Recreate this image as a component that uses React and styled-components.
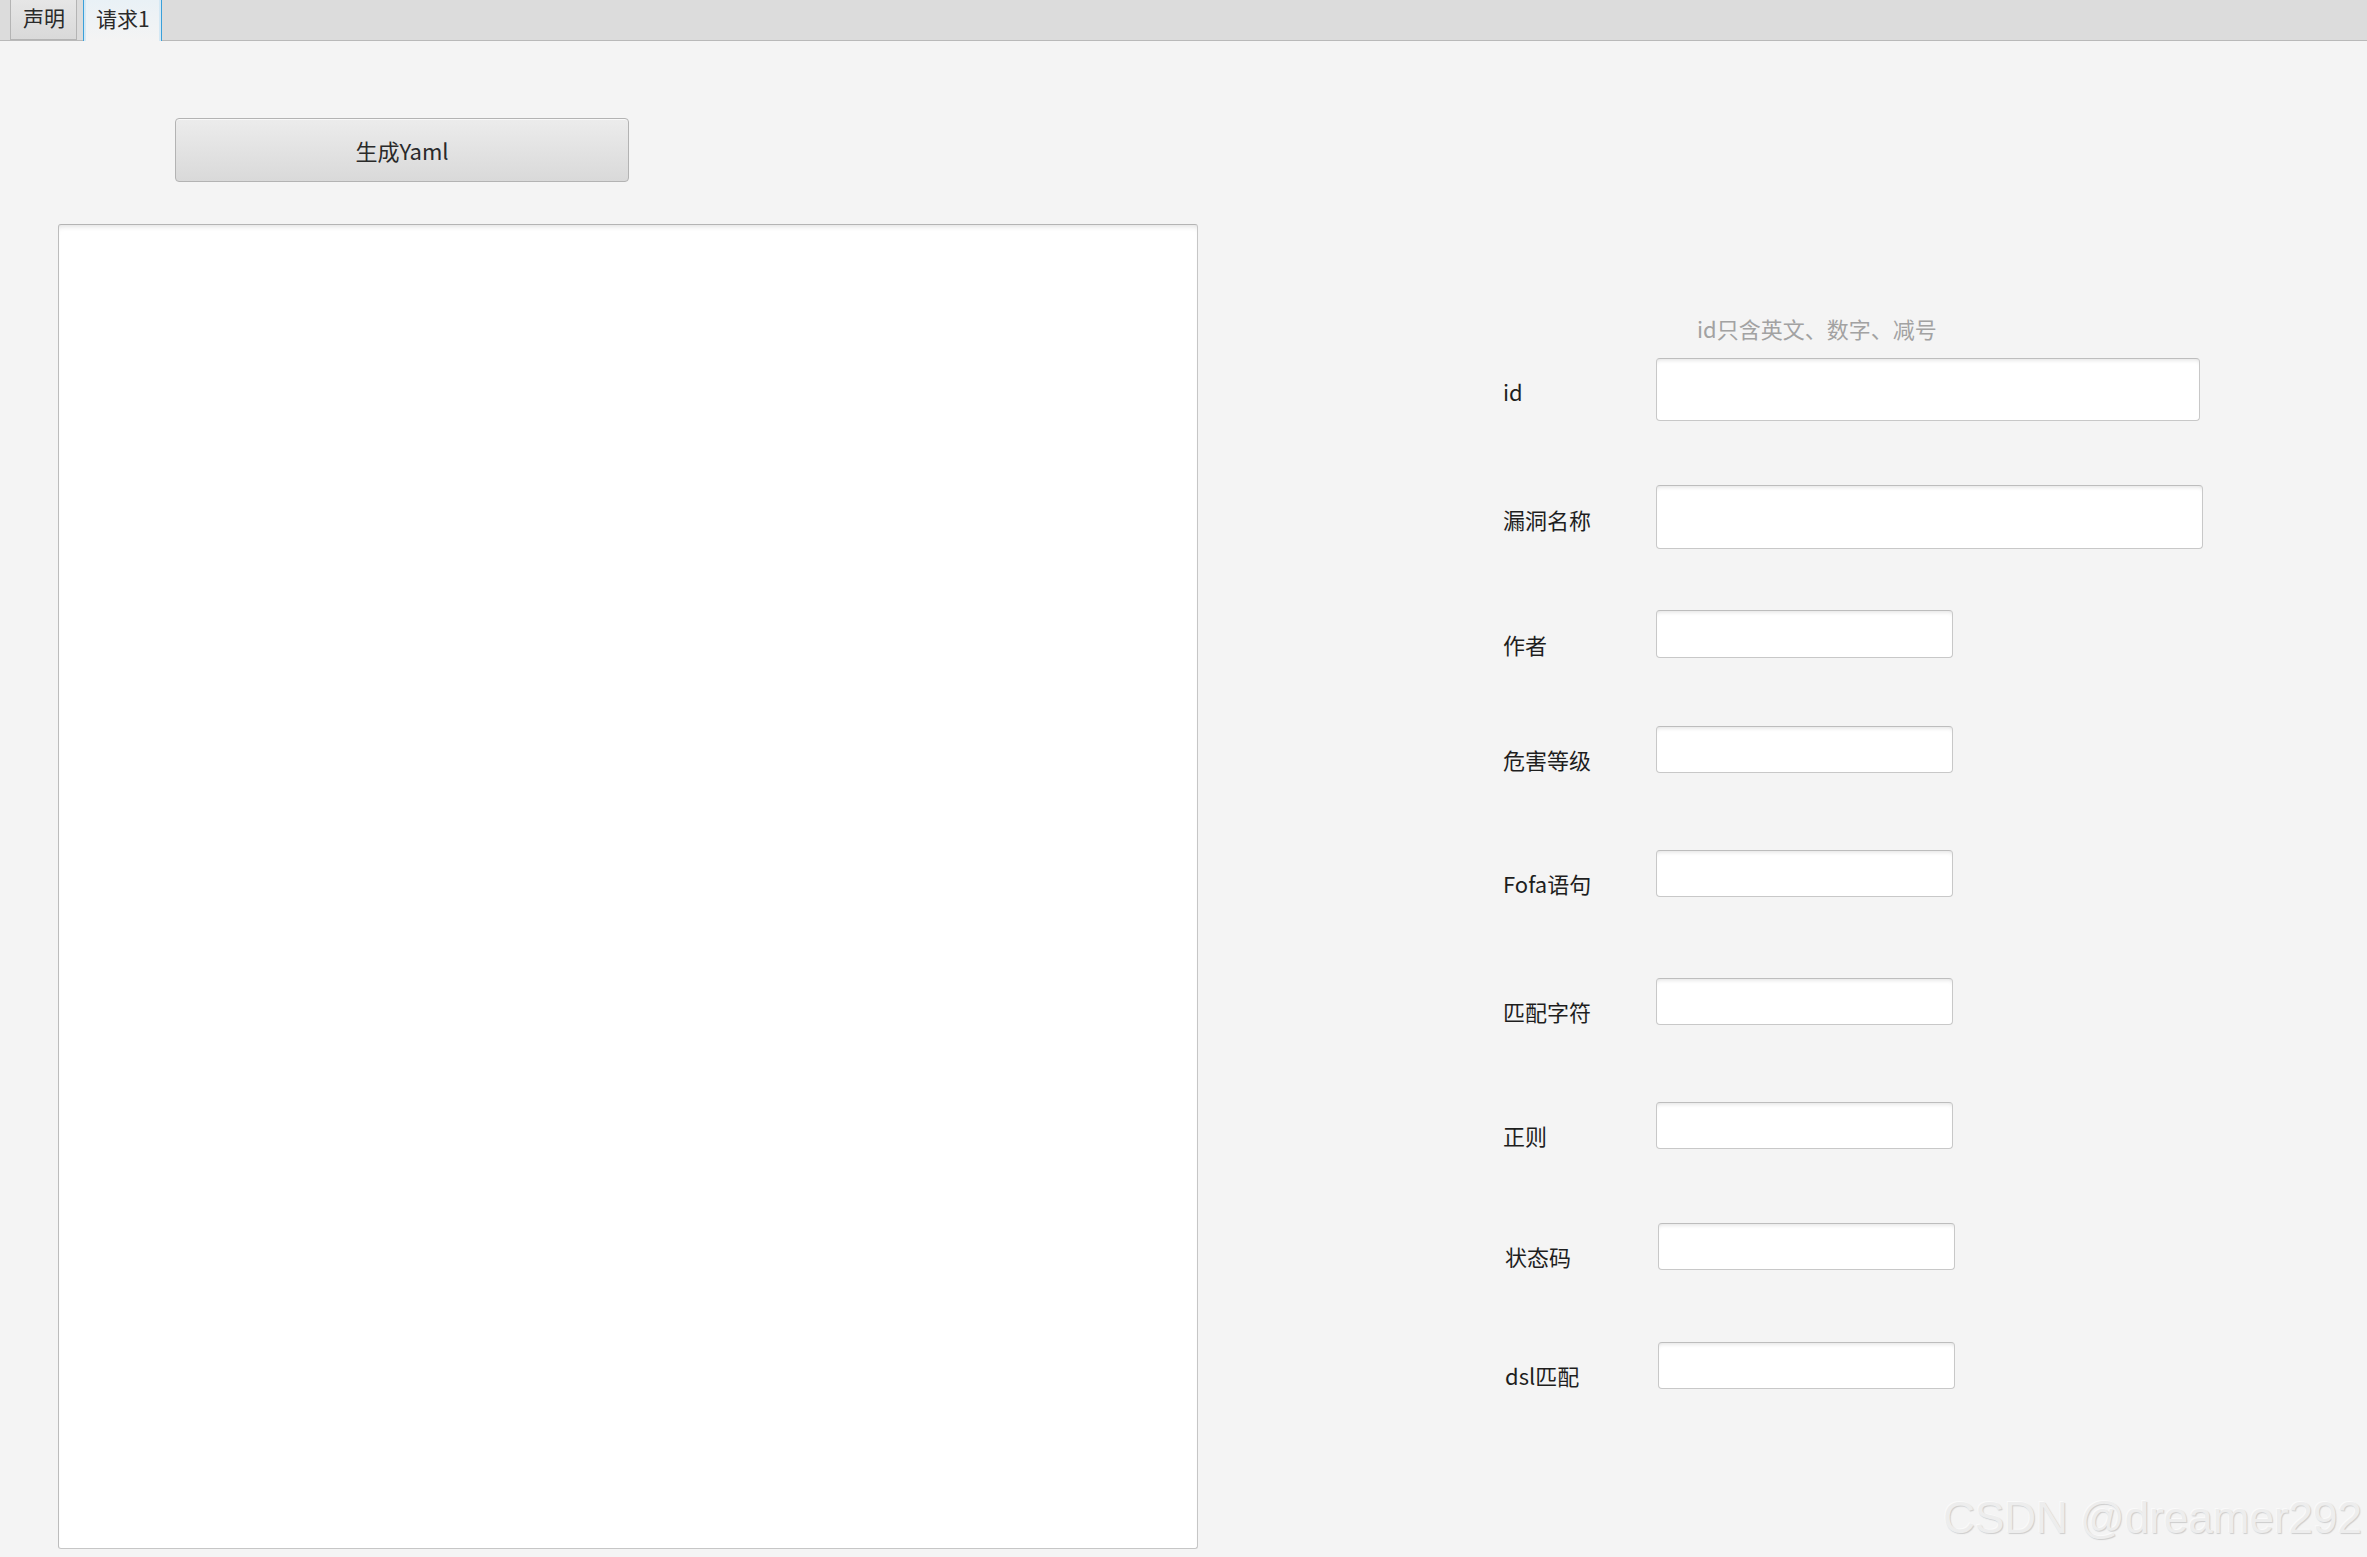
import React from "react"
import styled, { createGlobalStyle } from "styled-components"

const GlobalStyle = createGlobalStyle`
  html, body {
    margin: 0;
    padding: 0;
    background: #f4f4f4;
  }
  body {
    font-family: "Noto Sans CJK SC", "Noto Sans", sans-serif;
    color: #222;
  }
`

const Page = styled.div`
  position: relative;
  width: 2367px;
  height: 1557px;
  overflow: hidden;
  background: #f4f4f4;
`

const TabBar = styled.div`
  display: flex;
  align-items: flex-end;
  height: 40px;
  padding-left: 10px;
  gap: 6px;
  background: #dcdcdc;
  border-bottom: 1px solid #b9b9b9;
`

const Tab = styled.div`
  box-sizing: border-box;
  height: ${props => (props.$active ? "41px" : "40px")};
  margin-bottom: ${props => (props.$active ? "-1px" : "0")};
  padding: 0 11px ${props => (props.$active ? "6px" : "5px")} 12px;
  display: flex;
  align-items: center;
  font-size: 21px;
  color: #2a2a2a;
  border: 1px solid ${props => (props.$active ? "#3aa0da" : "#b4b4b4")};
  border-top: none;
  border-bottom: ${props => (props.$active ? "none" : "1px solid #b4b4b4")};
  background: ${props =>
    props.$active
      ? "linear-gradient(#e9f1f6, #f4f4f4)"
      : "linear-gradient(#e6e6e6, #d9d9d9)"};
  box-shadow: ${props =>
    props.$active ? "inset 2px 0 0 #d4e8f4, inset -2px 0 0 #d4e8f4" : "none"};
`

const Content = styled.div`
  display: flex;
`

const LeftPane = styled.div`
  display: flex;
  flex-direction: column;
  padding-left: 58px;
  width: 1140px;
`

const ButtonRow = styled.div`
  padding: 77px 0 0 117px;
`

const Button = styled.button`
  box-sizing: border-box;
  width: 454px;
  height: 64px;
  font-family: "Noto Sans CJK SC", "Noto Sans", sans-serif;
  font-size: 22px;
  color: #2a2a2a;
  border: 1px solid #b3b3b3;
  border-radius: 4px;
  background: linear-gradient(#ececec, #d9d9d9);
  box-shadow: inset 0 1px 0 #f8f8f8;
`

const TextArea = styled.textarea`
  box-sizing: border-box;
  margin-top: 42px;
  width: 1140px;
  height: 1325px;
  resize: none;
  outline: none;
  background: #fff;
  border: 1px solid #c6c6c6;
  border-top-color: #b4b4b4;
  border-left-color: #bcbcbc;
  border-radius: 3px;
  box-shadow: inset 0 5px 5px -3px #e4e4e4;
`

const Form = styled.div`
  display: flex;
  flex-direction: column;
  margin-left: 305px;
  padding-top: 272px;
`

const Hint = styled.div`
  margin-left: 194px;
  font-size: 22px;
  line-height: 30px;
  color: #a2a2a2;
`

const Row = styled.div`
  display: flex;
  align-items: center;
  padding-left: ${props => props.$shift}px;
`

const Label = styled.div`
  width: 153px;
  flex-shrink: 0;
  font-size: 22px;
  line-height: 22px;
  color: #1e1e1e;
  padding-top: ${props => (props.$small ? "19px" : "3px")};
`

const Input = styled.input`
  box-sizing: border-box;
  height: ${props => props.$h}px;
  width: ${props => props.$w}px;
  outline: none;
  background: #fff;
  border: 1px solid #c8c8c8;
  border-top-color: #bdbdbd;
  border-radius: 4px;
  box-shadow: inset 0 4px 4px -3px #e0e0e0;
`

const Watermark = styled.div`
  position: absolute;
  top: 1496px;
  right: 5px;
  font-family: "Liberation Sans", Arial, sans-serif;
  font-size: 44px;
  line-height: 1;
  color: #ededed;
  text-shadow: 1px 1px 1px #cdcdcd, -1px -1px 0 #fafafa;
  white-space: nowrap;
`

const fields = [
  { label: "id", gap: 15, h: 63, w: 544 },
  { label: "漏洞名称", gap: 64, h: 64, w: 547 },
  { label: "作者", gap: 61, h: 48, w: 297, small: true },
  { label: "危害等级", gap: 68, h: 47, w: 297, small: true },
  { label: "Fofa语句", gap: 77, h: 47, w: 297, small: true },
  { label: "匹配字符", gap: 81, h: 47, w: 297, small: true },
  { label: "正则", gap: 77, h: 47, w: 297, small: true },
  { label: "状态码", gap: 74, h: 47, w: 297, small: true, shift: 2 },
  { label: "dsl匹配", gap: 72, h: 47, w: 297, small: true, shift: 2 },
]

export default function App() {
  return (
    <Page>
      <GlobalStyle />
      <TabBar>
        <Tab>声明</Tab>
        <Tab $active>请求1</Tab>
      </TabBar>
      <Content>
        <LeftPane>
          <ButtonRow>
            <Button>生成Yaml</Button>
          </ButtonRow>
          <TextArea />
        </LeftPane>
        <Form>
          <Hint>id只含英文、数字、减号</Hint>
          {fields.map(f => (
            <Row key={f.label} $shift={f.shift || 0} style={{ marginTop: f.gap }}>
              <Label $small={f.small}>{f.label}</Label>
              <Input $h={f.h} $w={f.w} />
            </Row>
          ))}
        </Form>
      </Content>
      <Watermark>CSDN @dreamer292</Watermark>
    </Page>
  )
}
